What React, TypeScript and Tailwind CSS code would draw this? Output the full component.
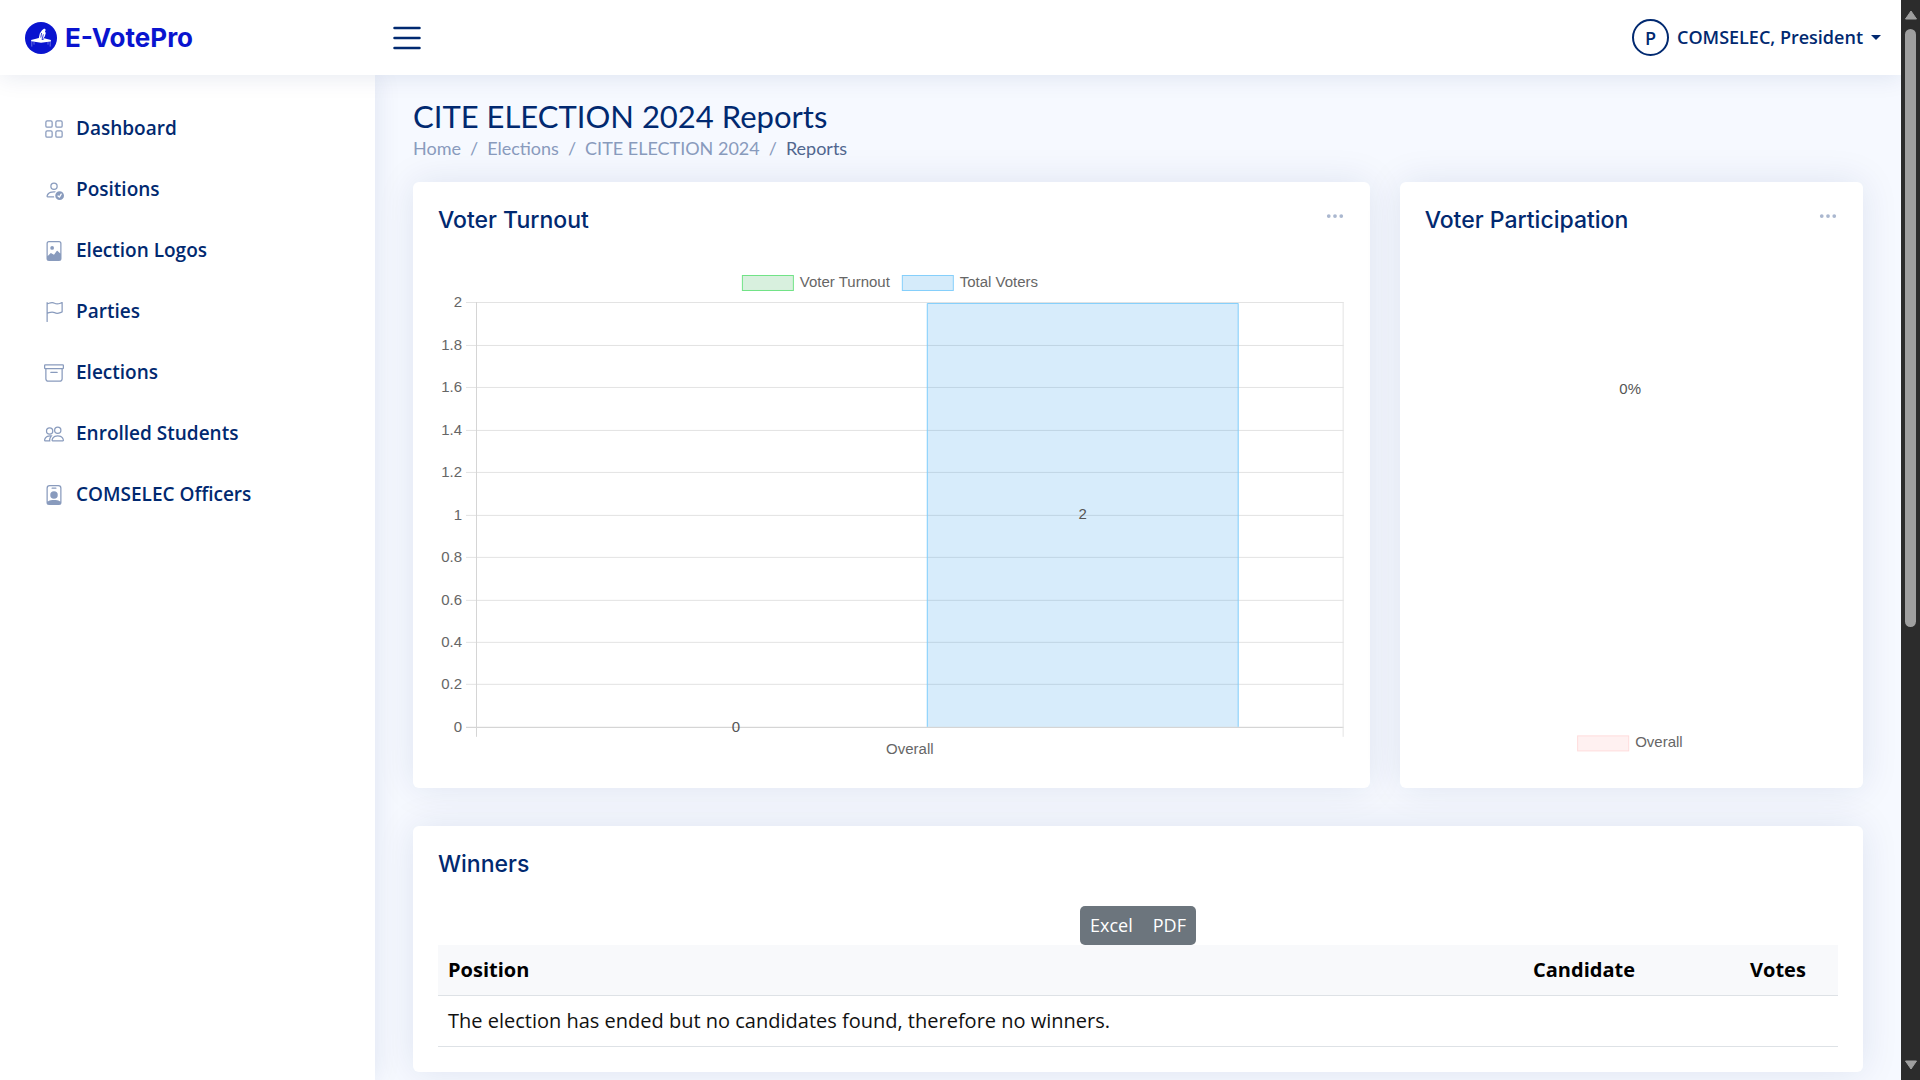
import {
  BsArchive,
  BsFileImage,
  BsFlag,
  BsGrid,
  BsList,
  BsPeople,
  BsPersonBadge,
  BsPersonCheck,
  BsThreeDots,
} from "react-icons/bs";

const navItems = [
  { label: "Dashboard", Icon: BsGrid },
  { label: "Positions", Icon: BsPersonCheck },
  { label: "Election Logos", Icon: BsFileImage },
  { label: "Parties", Icon: BsFlag },
  { label: "Elections", Icon: BsArchive },
  { label: "Enrolled Students", Icon: BsPeople },
  { label: "COMSELEC Officers", Icon: BsPersonBadge },
];

function Logo() {
  return (
    <svg viewBox="0 0 32 32" className="size-8" aria-hidden="true">
      <circle cx="16" cy="16" r="16" fill="#0a14cf" />
      <path
        d="M17 8.2 19.2 6.6 20.8 7.8 20 9.6 20.8 11 19.8 14.6 18.6 16 21 16.8 26 18 25.6 19.4 16 20.8 6.4 19.2 6 18 11 16.8 13.8 16 14.8 11.4Z"
        fill="#fff"
      />
      <path d="M16.6 11 15.8 15.6M18.4 12.4 17 17.6 19.2 16.8" stroke="#0a14cf" strokeWidth="0.8" fill="none" />
      <path d="M6.8 19v5.6M25.2 19v5.6M9 20v2.6M23 20v2.6" stroke="#fff" strokeOpacity="0.55" strokeWidth="0.7" />
    </svg>
  );
}

function Header() {
  return (
    <header className="relative z-20 flex h-[75px] shrink-0 items-center justify-between bg-white pr-5 pl-[25px] shadow-[0_2px_25px_rgba(1,41,112,0.1)]">
      <div className="flex items-center">
        <div className="flex w-[362px] items-center">
          <a href="#" className="flex items-center gap-2 font-[Inter,sans-serif] text-[26px] font-bold text-[#0a14cf]">
            <Logo />
            <span>E-VotePro</span>
          </a>
        </div>
        <button type="button" aria-label="Toggle sidebar" className="text-[#012970]">
          <BsList size={40} />
        </button>
      </div>
      <button type="button" className="flex items-center text-lg font-semibold text-[#012970]">
        <span className="flex size-[37px] items-center justify-center rounded-full border-2 border-[#012970]">P</span>
        <span className="pb-0.5 pl-2">COMSELEC, President</span>
        <span className="ml-2 border-x-5 border-t-5 border-x-transparent border-t-[#012970]" />
      </button>
    </header>
  );
}

function Sidebar() {
  return (
    <aside className="z-10 w-[375px] shrink-0 bg-white px-[25px] pt-[26px] shadow-[0_0_25px_rgba(1,41,112,0.1)]">
      <nav>
        <ul className="flex flex-col gap-1.5">
          {navItems.map(({ label, Icon }) => (
            <li key={label}>
              <a href="#" className="flex h-[55px] items-center gap-3 px-[19px] text-[19px] font-semibold text-[#012970]">
                <Icon size={20} className="shrink-0 text-[#899bbd]" />
                {label}
              </a>
            </li>
          ))}
        </ul>
      </nav>
    </aside>
  );
}

const ticks = ["2", "1.8", "1.6", "1.4", "1.2", "1", "0.8", "0.6", "0.4", "0.2", "0"];
const tickY = [39, 82, 124, 167, 209, 252, 294, 337, 379, 421, 464];

function TurnoutChart() {
  return (
    <svg
      viewBox="0 0 907 500"
      className="block w-full font-['Liberation_Sans',Arial,sans-serif] text-[15px]"
      role="img"
      aria-label="Voter turnout bar chart"
    >
      <rect x="304.5" y="12.5" width="51" height="15" fill="#d8f0de" stroke="#71e387" />
      <text x="362" y="24" fill="#666">Voter Turnout</text>
      <rect x="464.5" y="12.5" width="51" height="15" fill="#d5ebfa" stroke="#85cffb" />
      <text x="522" y="24" fill="#666">Total Voters</text>
      {ticks.map((tick, i) => (
        <g key={tick}>
          <rect x="28" y={tickY[i]} width="878" height="1" fill={tick === "0" ? "#cccccc" : "#e3e3e3"} />
          <text x="24" y={tickY[i] + 5} textAnchor="end" fill="#666">{tick}</text>
        </g>
      ))}
      <rect x="38" y="39" width="1" height="435" fill="#d5d5d5" />
      <rect x="905" y="39" width="1" height="435" fill="#e3e3e3" />
      <rect x="489" y="40" width="312" height="424" fill="#36a2eb" fillOpacity="0.2" />
      <path d="M489.5 464V40.5H800.5V464" fill="none" stroke="#85cffb" />
      <text x="298" y="469" textAnchor="middle" fill="#555">0</text>
      <text x="645" y="256" textAnchor="middle" fill="#555">2</text>
      <text x="472" y="491" textAnchor="middle" fill="#666">Overall</text>
    </svg>
  );
}

function ParticipationChart() {
  return (
    <svg
      viewBox="0 0 413 500"
      className="block w-full font-['Liberation_Sans',Arial,sans-serif] text-[15px]"
      role="img"
      aria-label="Voter participation chart"
    >
      <text x="205" y="131" textAnchor="middle" fill="#555">0%</text>
      <rect x="152.5" y="472.5" width="51" height="15" fill="#fff1f1" stroke="#ffdcdc" />
      <text x="210" y="484" fill="#666">Overall</text>
    </svg>
  );
}

const cardTitle = "font-[Inter,sans-serif] text-[23px] leading-[28px] font-medium text-[#012970]";
const card = "rounded-md bg-white px-[25px] shadow-[0_0_37px_rgba(1,41,112,0.1)]";

function ChartCard({ title, children, className }: { title: string; children: React.ReactNode; className: string }) {
  return (
    <section className={`${card} pb-[25px] ${className}`}>
      <div className="mb-[29px] flex items-start justify-between pt-6">
        <h2 className={cardTitle}>{title}</h2>
        <button type="button" aria-label={`${title} options`} className="text-[#aab7cf]">
          <BsThreeDots size={20} />
        </button>
      </div>
      {children}
    </section>
  );
}

function Winners() {
  return (
    <section className={`${card} pt-6 pb-[25px]`}>
      <h2 className={cardTitle}>Winners</h2>
      <div className="mt-7 flex justify-center">
        <div className="flex h-[39px] overflow-hidden rounded-[5px] bg-[#6c757d] text-lg text-white">
          <button type="button" className="px-[10px] pb-0.5">Excel</button>
          <button type="button" className="px-[10px] pb-0.5">PDF</button>
        </div>
      </div>
      <table className="w-full text-left text-xl leading-[30px] text-black">
        <thead>
          <tr className="border-b border-[#dee2e6] bg-[#f8f9fb]">
            <th className="p-[10px] font-bold">Position</th>
            <th className="w-[217px] p-[10px] font-bold">Candidate</th>
            <th className="w-[98px] p-[10px] font-bold">Votes</th>
          </tr>
        </thead>
        <tbody>
          <tr className="border-b border-[#dee2e6] text-[#111]">
            <td colSpan={3} className="p-[10px]">
              The election has ended but no candidates found, therefore no winners.
            </td>
          </tr>
        </tbody>
      </table>
    </section>
  );
}

function ScrollBar() {
  return (
    <div aria-hidden="true" className="flex w-[19px] shrink-0 flex-col items-center bg-[#2c2c2c] py-[10px]">
      <svg viewBox="0 0 12 10" className="h-[10px] w-3 shrink-0">
        <path d="M6 1 11.5 9H.5Z" fill="#9f9f9f" stroke="#9f9f9f" strokeLinejoin="round" />
      </svg>
      <div className="mt-[9px] flex-1">
        <div className="h-[58%] w-[11px] rounded-full bg-[#9f9f9f]" />
      </div>
      <svg viewBox="0 0 12 10" className="h-[10px] w-3 shrink-0">
        <path d="M6 9 11.5 1H.5Z" fill="#9f9f9f" stroke="#9f9f9f" strokeLinejoin="round" />
      </svg>
    </div>
  );
}

export default function App() {
  return (
    <div className="flex h-screen overflow-hidden bg-[#f6f9ff] font-['Open_Sans',sans-serif]">
      <div className="flex min-w-0 flex-1 flex-col overflow-hidden">
        <Header />
        <div className="flex min-h-0 flex-1">
          <Sidebar />
          <main className="min-w-0 flex-1 overflow-hidden px-[38px] pt-[23px]">
            <h1 className="font-[Lato,sans-serif] text-[31px] leading-9 text-[#012970]">CITE ELECTION 2024 Reports</h1>
            <nav aria-label="Breadcrumb" className="font-[Lato,sans-serif] text-lg leading-7 text-[#899bbd]">
              <ol className="flex gap-[9px]">
                <li><a href="#">Home</a></li>
                <li aria-hidden="true">/</li>
                <li><a href="#">Elections</a></li>
                <li aria-hidden="true">/</li>
                <li><a href="#">CITE ELECTION 2024</a></li>
                <li aria-hidden="true">/</li>
                <li className="text-[#51678f]">Reports</li>
              </ol>
            </nav>
            <div className="mt-5 grid grid-cols-3 gap-[30px]">
              <ChartCard title="Voter Turnout" className="col-span-2">
                <TurnoutChart />
              </ChartCard>
              <ChartCard title="Voter Participation" className="">
                <ParticipationChart />
              </ChartCard>
            </div>
            <div className="mt-[38px]">
              <Winners />
            </div>
          </main>
        </div>
      </div>
      <ScrollBar />
    </div>
  );
}
